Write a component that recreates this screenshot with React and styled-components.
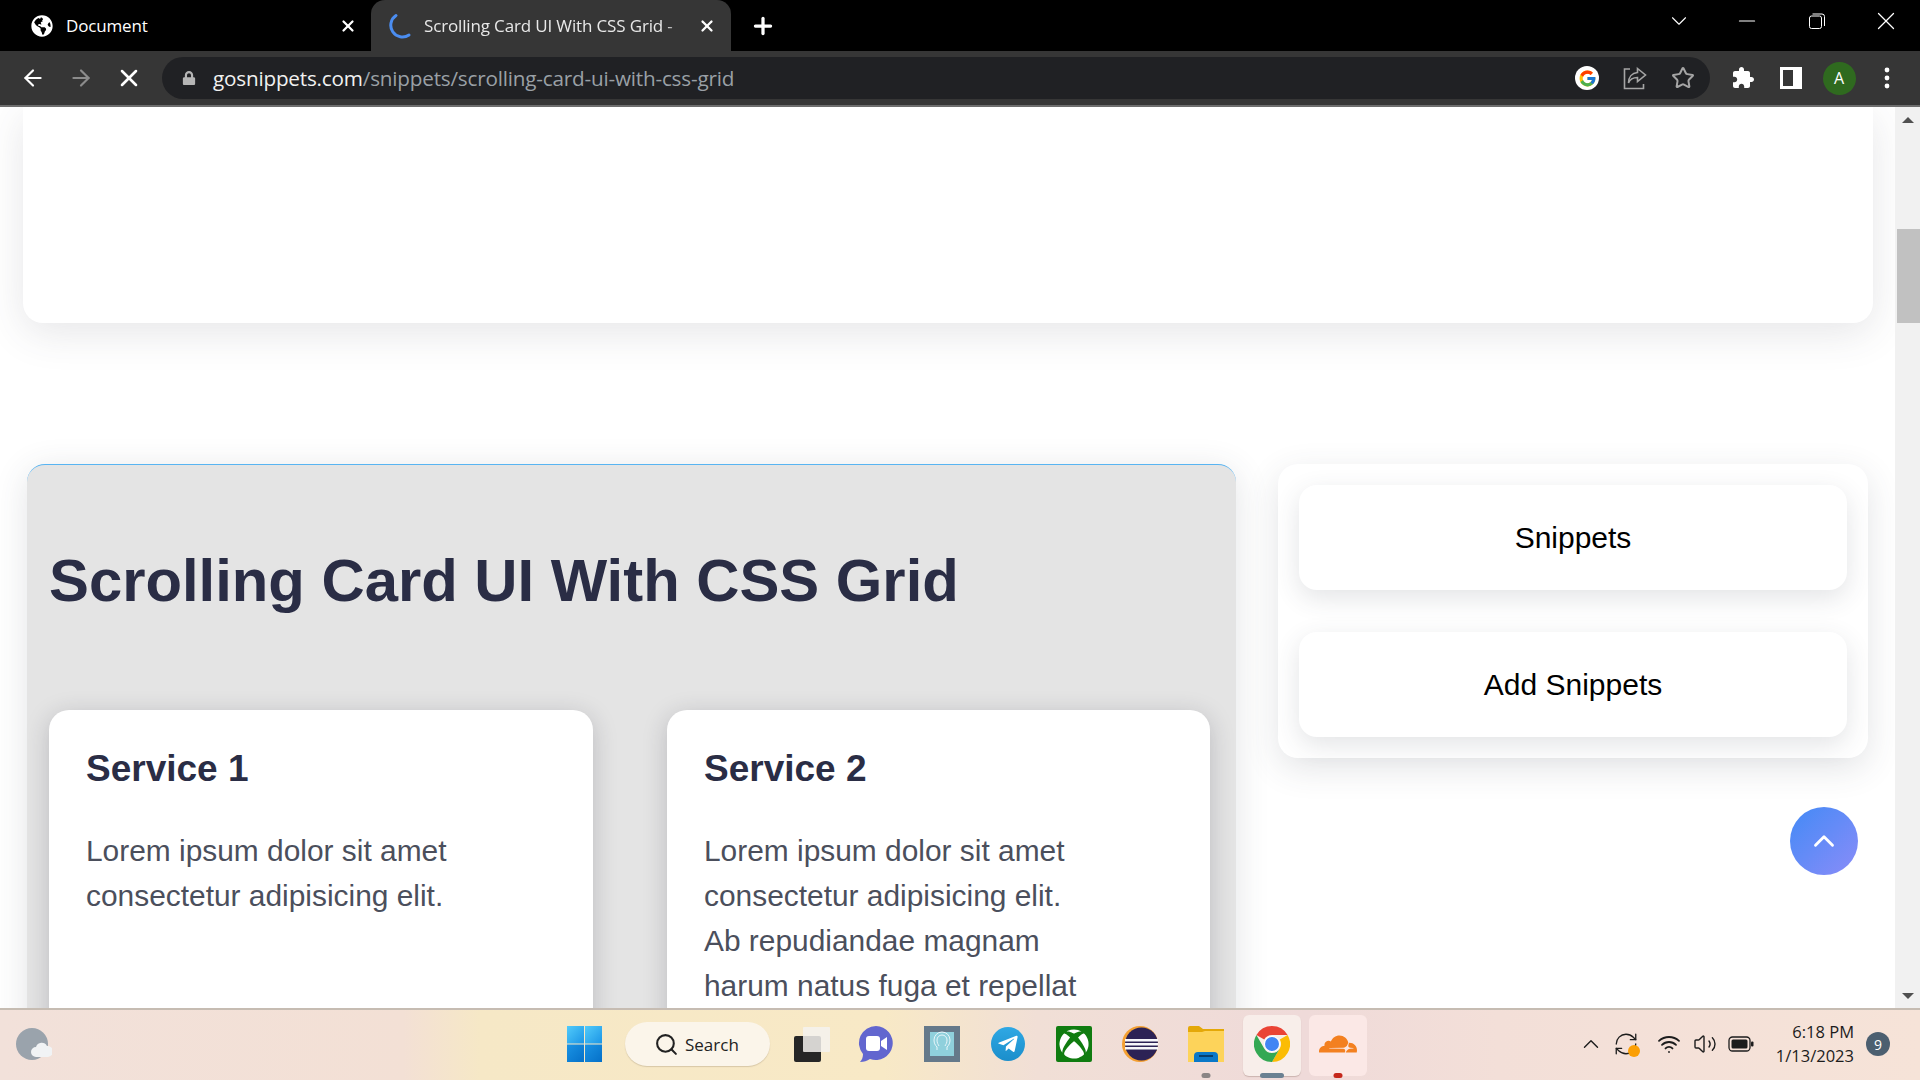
import React from 'react';
import styled, { createGlobalStyle } from 'styled-components';
import { FaGlobeAmericas, FaXbox, FaTelegramPlane, FaLock } from 'react-icons/fa';
import { FcGoogle } from 'react-icons/fc';
import { SiCloudflare } from 'react-icons/si';
import { ArrowLeft, ArrowRight, X, Star, Plus, ChevronUp, ChevronDown, Minus, Search as SearchIcon, Wifi, Volume2, RefreshCw } from 'lucide-react';

const GlobalStyle = createGlobalStyle`
  html, body {
    margin: 0;
    height: 100%;
    overflow: hidden;
    background: #fff;
  }
  * { box-sizing: border-box; }
`;

const Screen = styled.div`
  width: 1920px;
  height: 1080px;
  display: flex;
  flex-direction: column;
  font-family: 'Open Sans', 'Noto Sans', sans-serif;
  overflow: hidden;
`;

/* browser chrome */
const TabStrip = styled.div`
  height: 51px;
  background: #000;
  display: flex;
  align-items: stretch;
  color: #fff;
`;

const Tab = styled.div`
  width: ${p => p.$width}px;
  display: flex;
  align-items: center;
  padding: 0 ${p => p.$active ? 15 : 14}px 0 ${p => p.$active ? 17 : 31}px;
  gap: ${p => p.$active ? 12 : 13}px;
  background: ${p => p.$active ? '#363636' : 'transparent'};
  border-radius: 14px 14px 0 0;
  font-size: 17px;
  letter-spacing: -0.15px;
  white-space: nowrap;
`;

const TabTitle = styled.span`
  flex: 1;
  overflow: hidden;
  color: ${p => p.$active ? '#e8e8e8' : '#fff'};
  ${p => p.$active && 'mask-image: linear-gradient(90deg, #000 92%, transparent 100%);'}
`;

const NewTab = styled.div`
  width: 64px;
  display: flex;
  align-items: center;
  justify-content: center;
`;

const WindowControls = styled.div`
  margin-left: auto;
  display: flex;
  align-items: flex-start;
  padding: 8px 1px 0 0;
`;

const WindowButton = styled.div`
  width: ${p => p.$width}px;
  height: 26px;
  display: flex;
  align-items: center;
  justify-content: center;
`;

const Toolbar = styled.div`
  height: 56px;
  background: #363636;
  border-bottom: 2px solid #6d6d6d;
  display: flex;
  align-items: center;
  padding: 0 9px;
`;

const ToolSlot = styled.div`
  width: 48px;
  height: 42px;
  flex: none;
  display: flex;
  align-items: center;
  justify-content: center;
  color: ${p => p.$color || '#fff'};
`;

const Omnibox = styled.div`
  width: 1548px;
  height: 42px;
  margin: 0 9px;
  padding: 0 3px 0 20px;
  background: #202124;
  border-radius: 21px;
  display: flex;
  align-items: center;
  flex: none;
`;

const Url = styled.div`
  flex: 1;
  margin-left: 17px;
  font-size: 20.7px;
  letter-spacing: -0.2px;
  color: #9aa0a6;
  strong {
    font-weight: 400;
    color: #f1f1f1;
  }
`;

const GoogleBadge = styled.div`
  width: 24px;
  height: 24px;
  border-radius: 50%;
  background: #fff;
  display: flex;
  align-items: center;
  justify-content: center;
`;

const Avatar = styled.div`
  width: 33px;
  height: 33px;
  border-radius: 50%;
  background: #2f6a1f;
  color: #fff;
  font-size: 16px;
  display: flex;
  align-items: center;
  justify-content: center;
`;

/* page */
const Viewport = styled.div`
  flex: 1;
  min-height: 0;
  display: flex;
  position: relative;
  background: #fff;
  overflow: hidden;
  font-family: 'Liberation Sans', Arial, sans-serif;
`;

const Page = styled.div`
  flex: 1;
  padding: 0 22px 0 23px;
`;

const HeroCard = styled.div`
  height: 216px;
  background: #fff;
  border-radius: 0 0 20px 20px;
  box-shadow: 0 10px 40px rgba(60, 64, 80, 0.13);
`;

const Columns = styled.div`
  margin-top: 141px;
  display: flex;
  align-items: flex-start;
`;

const Article = styled.section`
  width: 1209px;
  margin-left: 4px;
  padding: 0 27px 0 22px;
  background: #e4e4e4;
  border-top: 1px solid #58b4f2;
  border-radius: 18px 18px 0 0;
  box-shadow: 0 6px 34px rgba(60, 64, 80, 0.14);
`;

const Title = styled.h1`
  margin: 80px 0 94px;
  font-size: 59.8px;
  line-height: 71px;
  font-weight: 700;
  color: #2a2d45;
  white-space: nowrap;
`;

const ServiceGrid = styled.div`
  display: grid;
  grid-template-columns: 544px 543px;
  column-gap: 74px;
`;

const ServiceCard = styled.article`
  background: #fff;
  border-radius: 20px 20px 0 0;
  padding: 38px 110px 60px 37px;
  box-shadow: 0 5px 24px rgba(40, 40, 60, 0.22);
`;

const ServiceName = styled.h2`
  margin: 0 0 38px;
  font-size: 37px;
  line-height: 42px;
  font-weight: 700;
  color: #2a2d45;
  white-space: nowrap;
`;

const ServiceText = styled.p`
  margin: 0;
  font-size: 29.9px;
  line-height: 45px;
  color: #4b4f5c;
`;

const Sidebar = styled.aside`
  width: 590px;
  margin-left: 42px;
  padding: 21px;
  display: flex;
  flex-direction: column;
  gap: 42px;
  background: #fff;
  border-radius: 20px;
  box-shadow: 0 10px 34px rgba(60, 64, 80, 0.14);
`;

const SideLink = styled.a`
  height: 105px;
  display: flex;
  align-items: center;
  justify-content: center;
  background: #fff;
  border-radius: 18px;
  font-size: 30px;
  color: #000;
  box-shadow: 0 8px 26px rgba(60, 64, 80, 0.14);
`;

const BackToTop = styled.button`
  position: absolute;
  right: 62px;
  top: 700px;
  width: 68px;
  height: 68px;
  padding: 0;
  border: 0;
  border-radius: 50%;
  background: linear-gradient(135deg, #438af6, #8a8cf8);
  color: #fff;
  display: flex;
  align-items: center;
  justify-content: center;
`;

const Scrollbar = styled.div`
  width: 25px;
  flex: none;
  background: #f1f1f1;
  display: flex;
  flex-direction: column;
`;

const ScrollArrow = styled.div`
  height: 25px;
  flex: none;
  margin-top: ${p => p.$bottom ? 'auto' : 0};
  display: flex;
  align-items: center;
  justify-content: center;
  &::before {
    content: '';
    border-left: 6px solid transparent;
    border-right: 6px solid transparent;
    border-${p => p.$bottom ? 'top' : 'bottom'}: 6px solid #505050;
  }
`;

const ScrollThumb = styled.div`
  height: 94px;
  margin: 97px 0 0 2px;
  background: #c1c1c1;
`;

/* taskbar */
const Taskbar = styled.div`
  height: 72px;
  flex: none;
  padding-bottom: 2px;
  border-top: 2px solid #c6bcb2;
  background: linear-gradient(90deg, #f2e1da 0%, #f3e0d5 21%, #f6e8c6 25%, #f8e9c6 46%, #f1dfd6 54%, #efdad9 68%, #f3dfd8 78%, #f6e3d8 100%);
  display: flex;
  align-items: center;
`;

const WeatherSlot = styled.div`
  width: 551px;
  padding-left: 16px;
  display: flex;
  align-items: center;
`;

const AppSlot = styled.div`
  width: 66px;
  height: 70px;
  flex: none;
  position: relative;
  display: flex;
  align-items: center;
  justify-content: center;
`;

const AppIcon = styled.div`
  position: relative;
  display: flex;
`;

const AppTile = styled.div`
  position: absolute;
  left: 4px;
  right: 4px;
  top: 6px;
  bottom: 3px;
  border-radius: 6px;
  background: ${p => p.$tint};
  box-shadow: ${p => p.$raised ? '0 1px 1px rgba(120, 90, 80, 0.3)' : 'none'};
`;

const RunDot = styled.span`
  position: absolute;
  left: 50%;
  bottom: 1px;
  width: ${p => p.$width}px;
  height: 5px;
  transform: translateX(-50%);
  border-radius: 3px;
  background: ${p => p.$color};
`;

const SearchPill = styled.div`
  width: 145px;
  height: 44px;
  margin: 0 7px 0 8px;
  flex: none;
  border-radius: 22px;
  background: #fbf5ea;
  box-shadow: 0 1px 1px rgba(120, 100, 70, 0.25);
  display: flex;
  align-items: center;
  gap: 6px;
  padding-left: 29px;
  font-size: 17px;
  color: #222;
`;

const Tray = styled.div`
  flex: 1;
  display: flex;
  align-items: center;
  justify-content: flex-end;
  padding-right: 30px;
  color: #1c1c1c;
`;

const TrayIcon = styled.div`
  width: ${p => p.$width || 36}px;
  margin-left: ${p => p.$gap || 0}px;
  display: flex;
  align-items: center;
  justify-content: center;
`;

const Clock = styled.div`
  margin-left: 17px;
  text-align: right;
  font-size: 16.5px;
  line-height: 24px;
  white-space: nowrap;
`;

const Badge = styled.div`
  width: 24px;
  height: 24px;
  margin-left: 12px;
  border-radius: 50%;
  background: #4c5f70;
  color: #fff;
  font-size: 14px;
  display: flex;
  align-items: center;
  justify-content: center;
`;

const Spinner = () => (
  <svg width="24" height="26" viewBox="0 0 24 26" fill="none">
    <path d="M8 2.5 A11 11 0 0 0 21 22" stroke="#4b8df0" strokeWidth="3" strokeLinecap="round" />
  </svg>
);

const RestoreIcon = () => (
  <svg width="16" height="16" viewBox="0 0 16 16" fill="none" stroke="#fff" strokeWidth="1">
    <rect x="0.5" y="3" width="12" height="12.5" rx="2" />
    <path d="M3.5 1h9.5a2.5 2.5 0 0 1 2.5 2.5V13" />
  </svg>
);

const ShareIcon = () => (
  <svg width="24" height="24" viewBox="0 0 24 24" fill="none" stroke="#a5a5a5" strokeWidth="1.6">
    <path d="M7 3H1.5v19.5h19V18" />
    <path d="M14.5 2.5 22.5 9l-8 6.5v-4C10 11.5 7 13 5.5 17c0-6 3.5-10 9-10.5z" />
  </svg>
);

const ExtensionIcon = () => (
  <svg width="24" height="24" viewBox="0 0 24 24" fill="#fff">
    <path d="M20.5 11H19V7c0-1.100-.900-2-2-2h-4V3.500C13 2.120 11.880 1 10.500 1S8 2.120 8 3.500V5H4c-1.100 0-1.990.900-1.990 2v3.800H3.500c1.490 0 2.700 1.210 2.700 2.700s-1.210 2.700-2.700 2.700H2V20c0 1.100.900 2 2 2h3.800v-1.500c0-1.490 1.210-2.700 2.700-2.700 1.490 0 2.700 1.210 2.700 2.700V22H17c1.100 0 2-.900 2-2v-4h1.500c1.380 0 2.500-1.120 2.500-2.500S21.880 11 20.500 11z" />
  </svg>
);

const SidePanelIcon = () => (
  <svg width="22" height="22" viewBox="0 0 22 22">
    <path fill="#fff" fillRule="evenodd" d="M0 0h22v22H0zM3 3v16h10V3z" />
  </svg>
);

const MenuDots = () => (
  <svg width="6" height="22" viewBox="0 0 6 22" fill="#fff">
    <circle cx="3" cy="3" r="2.4" />
    <circle cx="3" cy="11" r="2.4" />
    <circle cx="3" cy="19" r="2.4" />
  </svg>
);

const WeatherIcon = () => (
  <svg width="36" height="32" viewBox="0 0 36 32">
    <ellipse cx="16" cy="16" rx="16" ry="16" fill="#9aa3ac" />
    <path d="M20 29a5 5 0 0 1 0-10 6 6 0 0 1 11-1 5.500 5.500 0 0 1 1 11z" fill="#f1f3f5" />
  </svg>
);

const WindowsLogo = () => (
  <svg width="35" height="36" viewBox="0 0 35 36">
    <defs>
      <linearGradient id="winTop" x1="0" y1="0" x2="1" y2="1">
        <stop offset="0" stopColor="#52cbfa" />
        <stop offset="1" stopColor="#1b95e6" />
      </linearGradient>
      <linearGradient id="winBottom" x1="0" y1="0" x2="1" y2="1">
        <stop offset="0" stopColor="#1a93e4" />
        <stop offset="1" stopColor="#0570c8" />
      </linearGradient>
    </defs>
    <rect width="17" height="17.500" fill="url(#winTop)" />
    <rect x="18" width="17" height="17.500" fill="url(#winTop)" />
    <rect y="18.500" width="17" height="17.500" fill="url(#winBottom)" />
    <rect x="18" y="18.500" width="17" height="17.500" fill="url(#winBottom)" />
  </svg>
);

const TaskViewIcon = () => (
  <svg width="44" height="35" viewBox="-6 0 44 35">
    <rect x="0" y="9" width="27" height="26" rx="2" fill="#262626" />
    <rect x="9" y="0" width="27" height="25" rx="1" fill="#f4f2ee" opacity="0.85" />
  </svg>
);

const MeetIcon = () => (
  <svg width="36" height="38" viewBox="0 0 36 38">
    <path d="M18 1a17 17 0 1 1-6 33c-3 2-6 3-10 3 2-2 3-5 3-8A17 17 0 0 1 18 1z" fill="#6266cf" />
    <rect x="8" y="11" width="14" height="15" rx="3" fill="#fff" />
    <path d="M23 16l6-4v13l-6-4z" fill="#fff" />
  </svg>
);

const HeadAppIcon = () => (
  <svg width="36" height="36" viewBox="0 0 36 36" fill="none">
    <rect width="36" height="36" fill="#65798a" />
    <rect x="6" y="6" width="24" height="24" fill="#8fd0dc" />
    <path d="M13 24v-3c-2-2-3-4-3-7a8 8 0 0 1 16 0c0 3-1 5-3 7v3M15 20c-1-2-2-3-2-6a5 5 0 0 1 10 0c0 3-1 4-2 6" stroke="#e9f6fa" strokeWidth="1" />
  </svg>
);

const XboxTile = styled.div`
  width: 36px;
  height: 36px;
  border-radius: 2px;
  background: #107c10;
  color: #fff;
  display: flex;
  align-items: center;
  justify-content: center;
`;

const TelegramBadge = styled.div`
  width: 34px;
  height: 34px;
  border-radius: 50%;
  background: linear-gradient(180deg, #2fa8e4, #1b8ecb);
  color: #fff;
  display: flex;
  align-items: center;
  justify-content: center;
`;

const EclipseIcon = () => (
  <svg width="36" height="36" viewBox="0 0 36 36">
    <circle cx="18" cy="18" r="18" fill="#f4a032" />
    <circle cx="19.500" cy="18" r="16.500" fill="#2c2255" />
    <rect x="3" y="13" width="33" height="2.500" fill="#f7f7fa" />
    <rect x="3" y="17" width="33" height="2.500" fill="#f7f7fa" />
    <rect x="3" y="21" width="33" height="2.500" fill="#f7f7fa" />
  </svg>
);

const FolderIcon = () => (
  <svg width="36" height="36" viewBox="0 0 36 36">
    <path d="M0 2a2 2 0 0 1 2-2h9l4 3h21v6H0z" fill="#e4a808" />
    <path d="M0 6h14l3-1h19v31H0z" fill="#fdd35a" />
    <path d="M6 36v-6a4 4 0 0 1 4-4h16a4 4 0 0 1 4 4v6z" fill="#0a78c8" />
    <rect x="11" y="29" width="14" height="2" fill="#063f6e" />
  </svg>
);

const ChromeIcon = () => (
  <svg width="36" height="38" viewBox="-18 -19 36 38">
    <path d="M0 -18A18 18 0 0 1 15.600 -9H0A9 9 0 0 0 -7.800 -4.500L-15.600 -9A18 18 0 0 1 0 -18z" fill="#ea4335" />
    <path d="M15.600 -9A18 18 0 0 1 0 18L7.800 4.500A9 9 0 0 0 7.800 -4.500z" fill="#fbbc05" />
    <path d="M-15.600 -9L-7.800 4.500A9 9 0 0 0 7.800 4.500L0 18A18 18 0 0 1 -15.600 -9z" fill="#34a853" />
    <circle r="8" fill="#fff" />
    <circle r="7" fill="#4285f4" />
  </svg>
);

const BatteryIcon = () => (
  <svg width="26" height="16" viewBox="0 0 26 16" fill="none">
    <rect x="1" y="1" width="21" height="14" rx="3.500" stroke="#1c1c1c" strokeWidth="1.300" />
    <rect x="3.500" y="3.500" width="16" height="9" rx="1.500" fill="#1c1c1c" />
    <rect x="23" y="5.500" width="2.500" height="5" rx="1" fill="#1c1c1c" />
  </svg>
);

const SyncDot = styled.span`
  position: absolute;
  right: -1px;
  bottom: 0;
  width: 12px;
  height: 12px;
  border-radius: 50%;
  background: #fb9f05;
`;

const SyncWrap = styled.div`
  position: relative;
  display: flex;
`;

const pinned = [
  { name: 'task', icon: <TaskViewIcon /> },
  { name: 'meet', icon: <MeetIcon /> },
  { name: 'head', icon: <HeadAppIcon /> },
  { name: 'telegram', icon: <TelegramBadge><FaTelegramPlane size={22} /></TelegramBadge> },
  { name: 'xbox', icon: <XboxTile><FaXbox size={30} /></XboxTile> },
  { name: 'eclipse', icon: <EclipseIcon /> },
  { name: 'files', icon: <FolderIcon />, dot: { width: 9, color: '#8a8585' } },
  { name: 'chrome', icon: <ChromeIcon />, tint: '#f8eeea', raised: true, dot: { width: 24, color: '#6b8192' } },
  { name: 'cloud', icon: <SiCloudflare size={38} color="#f38020" />, tint: '#fbe8e6', dot: { width: 9, color: '#c5281c' } },
];

export default function App() {
  return (
    <Screen>
      <GlobalStyle />
      <TabStrip>
        <Tab $width={371}>
          <FaGlobeAmericas size={22} color="#fff" />
          <TabTitle>Document</TabTitle>
          <X size={18} strokeWidth={3} />
        </Tab>
        <Tab $width={360} $active>
          <Spinner />
          <TabTitle $active>Scrolling Card UI With CSS Grid -</TabTitle>
          <X size={18} strokeWidth={3} />
        </Tab>
        <NewTab><Plus size={26} strokeWidth={3} /></NewTab>
        <WindowControls>
          <WindowButton $width={68}><ChevronDown size={26} strokeWidth={1} /></WindowButton>
          <WindowButton $width={68}><Minus size={26} strokeWidth={1} /></WindowButton>
          <WindowButton $width={72}><RestoreIcon /></WindowButton>
          <WindowButton $width={66}><X size={30} strokeWidth={1} /></WindowButton>
        </WindowControls>
      </TabStrip>

      <Toolbar>
        <ToolSlot><ArrowLeft size={26} strokeWidth={2} /></ToolSlot>
        <ToolSlot $color="#8c8c8c"><ArrowRight size={26} strokeWidth={2} /></ToolSlot>
        <ToolSlot><X size={28} strokeWidth={2.2} /></ToolSlot>
        <Omnibox>
          <FaLock size={14} color="#b5b5b5" />
          <Url><strong>gosnippets.com</strong>/snippets/scrolling-card-ui-with-css-grid</Url>
          <ToolSlot><GoogleBadge><FcGoogle size={19} /></GoogleBadge></ToolSlot>
          <ToolSlot><ShareIcon /></ToolSlot>
          <ToolSlot $color="#a5a5a5"><Star size={24} strokeWidth={2} /></ToolSlot>
        </Omnibox>
        <ToolSlot><ExtensionIcon /></ToolSlot>
        <ToolSlot><SidePanelIcon /></ToolSlot>
        <ToolSlot><Avatar>A</Avatar></ToolSlot>
        <ToolSlot><MenuDots /></ToolSlot>
      </Toolbar>

      <Viewport>
        <Page>
          <HeroCard />
          <Columns>
            <Article>
              <Title>Scrolling Card UI With CSS Grid</Title>
              <ServiceGrid>
                <ServiceCard>
                  <ServiceName>Service 1</ServiceName>
                  <ServiceText>Lorem ipsum dolor sit amet consectetur adipisicing elit.</ServiceText>
                </ServiceCard>
                <ServiceCard>
                  <ServiceName>Service 2</ServiceName>
                  <ServiceText>Lorem ipsum dolor sit amet consectetur adipisicing elit. Ab repudiandae magnam harum natus fuga et repellat</ServiceText>
                </ServiceCard>
              </ServiceGrid>
            </Article>
            <Sidebar>
              <SideLink>Snippets</SideLink>
              <SideLink>Add Snippets</SideLink>
            </Sidebar>
          </Columns>
        </Page>
        <BackToTop aria-label="Back to top"><ChevronUp size={34} strokeWidth={2} /></BackToTop>
        <Scrollbar>
          <ScrollArrow />
          <ScrollThumb />
          <ScrollArrow $bottom />
        </Scrollbar>
      </Viewport>

      <Taskbar>
        <WeatherSlot><WeatherIcon /></WeatherSlot>
        <AppSlot><WindowsLogo /></AppSlot>
        <SearchPill><SearchIcon size={25} strokeWidth={2} />Search</SearchPill>
        {pinned.map(app => (
          <AppSlot key={app.name}>
            {app.tint && <AppTile $tint={app.tint} $raised={app.raised} />}
            <AppIcon>{app.icon}</AppIcon>
            {app.dot && <RunDot $width={app.dot.width} $color={app.dot.color} />}
          </AppSlot>
        ))}
        <Tray>
          <TrayIcon><ChevronUp size={26} strokeWidth={1.3} /></TrayIcon>
          <TrayIcon $width={34}>
            <SyncWrap>
              <RefreshCw size={26} strokeWidth={1.2} />
              <SyncDot />
            </SyncWrap>
          </TrayIcon>
          <TrayIcon $gap={8}><Wifi size={24} strokeWidth={1.8} /></TrayIcon>
          <TrayIcon><Volume2 size={24} strokeWidth={1.4} /></TrayIcon>
          <TrayIcon><BatteryIcon /></TrayIcon>
          <Clock>6:18 PM<br />1/13/2023</Clock>
          <Badge>9</Badge>
        </Tray>
      </Taskbar>
    </Screen>
  );
}
